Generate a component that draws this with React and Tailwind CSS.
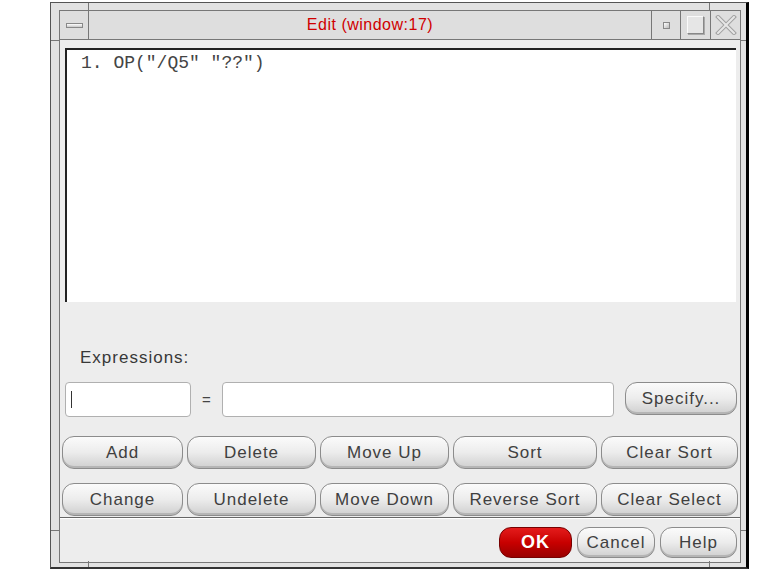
import React from 'react';

const btn =
  'h-[33px] rounded-[12px] border border-[#8c8c8c] bg-gradient-to-b from-[#fbfbfb] via-[#ececec] to-[#cfcfcf] shadow-[inset_0_-2px_0_#b5b5b5] text-[17px] tracking-[1px] text-[#404040] leading-none flex items-center justify-center';

const rows = [
  [
    ['Add', 'w-[121px]'],
    ['Delete', 'w-[129px]'],
    ['Move Up', 'w-[129px]'],
    ['Sort', 'w-[144px]'],
    ['Clear Sort', 'w-[137px]'],
  ],
  [
    ['Change', 'w-[121px]'],
    ['Undelete', 'w-[129px]'],
    ['Move Down', 'w-[129px]'],
    ['Reverse Sort', 'w-[144px]'],
    ['Clear Select', 'w-[137px]'],
  ],
];

const App = () => {
  return (
    <div className="w-[768px] h-[570px] bg-white overflow-hidden font-['Liberation_Sans',Arial,sans-serif]">
      <div className="relative ml-[50px] mt-[2px] w-[699px] h-[567px] border-l border-t border-[#555] border-r-[3px] border-r-black border-b-2 border-b-[#333] bg-[#e2e2e2] pt-[7px] pl-[8px] pr-[5px] pb-[4px]">
        {/* frame corner marks */}
        <div className="absolute left-[37px] top-0 w-px h-[8px] bg-[#777]" />
        <div className="absolute left-[658px] top-0 w-px h-[8px] bg-[#777]" />
        <div className="absolute left-[37px] bottom-0 w-px h-[6px] bg-[#777]" />
        <div className="absolute left-[658px] bottom-0 w-px h-[6px] bg-[#777]" />
        <div className="absolute left-0 top-[37px] w-[8px] h-px bg-[#777]" />
        <div className="absolute right-0 top-[37px] w-[5px] h-px bg-[#777]" />
        <div className="absolute left-0 bottom-[36px] w-[8px] h-px bg-[#777]" />
        <div className="absolute right-0 bottom-[36px] w-[5px] h-px bg-[#777]" />

        <div className="h-full border border-[#777] flex flex-col bg-[#ededed]">
          {/* title bar */}
          <div className="h-[29px] flex border-b border-[#777] bg-[#dedede]">
            <div className="w-[29px] border-r border-[#777] flex items-center justify-center">
              <div className="w-[17px] h-[5px] border border-[#888] bg-gradient-to-b from-white to-[#c8c8c8]" />
            </div>
            <div className="flex-1 flex items-center justify-center text-[16px] tracking-[0.5px] text-[#d00000]">
              Edit (window:17)
            </div>
            <div className="w-[29px] border-l border-[#777] flex items-center justify-center">
              <div className="w-[7px] h-[7px] border border-[#888] bg-gradient-to-br from-white to-[#bbb]" />
            </div>
            <div className="w-[30px] border-l border-[#777] flex items-center justify-center">
              <div className="w-[17px] h-[18px] border border-[#888] border-t-[#fafafa] border-l-[#fafafa] bg-[#e6e6e6] shadow-[1px_1px_0_#aaa]" />
            </div>
            <div className="w-[30px] border-l border-[#777] flex items-center justify-center">
              <svg width="22" height="20" viewBox="0 0 22 20">
                <path d="M3 2 L19 18 M19 2 L3 18" stroke="#a0a0a0" strokeWidth="4" strokeLinecap="square" />
                <path d="M3 2 L19 18 M19 2 L3 18" stroke="#e6e6e6" strokeWidth="2" strokeLinecap="square" />
              </svg>
            </div>
          </div>

          {/* list area */}
          <div className="mt-[8px] ml-[5px] mr-[4px] h-[254px] bg-white border-t-2 border-l-2 border-[#222] font-['Liberation_Mono',monospace] text-[18px] text-[#444] pl-[14px] pt-[2px] leading-[22px]">
            1. OP("/Q5" "??")
          </div>

          <div className="mt-[47px] ml-[20px] text-[17px] tracking-[1px] text-[#383838] leading-[18px]">Expressions:</div>

          <div className="mt-[15px] flex items-start ml-[5px]">
            <div className="w-[126px] h-[35px] bg-white border border-[#b0b0b0] rounded-[4px] flex items-center pl-[5px]">
              <div className="w-px h-[17px] bg-[#333]" />
            </div>
            <div className="w-[31px] text-center text-[15px] text-[#444] leading-[35px]">=</div>
            <div className="w-[392px] h-[35px] bg-white border border-[#b0b0b0] rounded-[4px]" />
            <div className={btn + ' w-[112px] ml-[11px]'}>Specify...</div>
          </div>

          <div className="mt-[19px] flex flex-col gap-[14px] ml-[2px]">
            {rows.map((row, i) => (
              <div key={i} className="flex gap-[4px]">
                {row.map(([label, w]) => (
                  <div key={label} className={btn + ' ' + w}>{label}</div>
                ))}
              </div>
            ))}
          </div>

          <div className="mt-[1px] border-t border-[#666] border-b border-b-white" />

          <div className="mt-[8px] flex justify-end gap-[5px] pr-[3px]">
            <div className="w-[73px] h-[31px] rounded-[12px] border border-[#700] bg-gradient-to-b from-[#e41a1a] via-[#c80000] to-[#990000] text-white font-bold text-[18px] tracking-[1px] flex items-center justify-center">
              OK
            </div>
            <div className={btn + ' !h-[31px] w-[78px]'}>Cancel</div>
            <div className={btn + ' !h-[31px] w-[77px]'}>Help</div>
          </div>
        </div>
      </div>
    </div>
  );
};

export default App;
